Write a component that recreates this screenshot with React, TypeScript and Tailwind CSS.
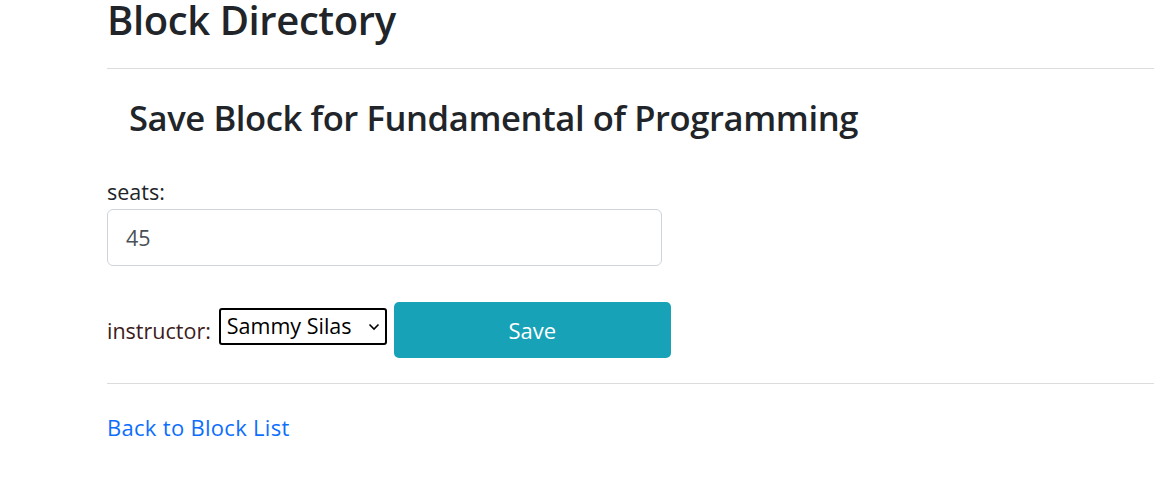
import React from "react";

export default function App() {
  return (
    <div className="min-h-[499px] bg-white pl-[107px] text-[#212529]" style={{ fontFamily: '"Open Sans", "Noto Sans", sans-serif' }}>
      <h1 className="text-[40px] font-semibold leading-[40px] tracking-[-0.4px]">Block Directory</h1>
      <hr className="mt-[28px] border-0 border-t border-[#dcdcdc]" />
      <h2 className="mt-[29px] pl-[22px] text-[34.6px] font-semibold leading-[40px] tracking-[-0.4px]">
        Save Block for Fundamental of Programming
      </h2>
      <div className="mt-[41px] text-[21.5px] leading-[26px]">seats:</div>
      <input
        defaultValue="45"
        className="mt-[4px] block h-[57px] w-[555px] rounded-[6px] border border-[#ced4da] px-[18px] text-[21.5px] text-[#495057] outline-none"
      />
      <div className="mt-[36px] flex items-start">
        <span className="mt-[16px] text-[21.5px] leading-[26px] text-[#3d1c1c]">instructor:</span>
        <div className="ml-[8px] mt-[6px] flex h-[37px] w-[168px] items-center rounded-[3px] border-2 border-black pl-[6px] pr-[5px] text-[21.5px] text-black">
          <span className="flex-1 whitespace-nowrap">Sammy Silas</span>
          <svg width="12" height="8" viewBox="0 0 12 8" fill="none" stroke="black" strokeWidth="1.6">
            <path d="M1.5 1.5 L6 6 L10.5 1.5" />
          </svg>
        </div>
        <button className="ml-[7px] h-[56px] w-[277px] rounded-[5px] bg-[#17a2b8] text-[22px] text-white">Save</button>
      </div>
      <hr className="mt-[25px] border-0 border-t border-[#dcdcdc]" />
      <a href="#" className="mt-[30px] block w-fit text-[22px] leading-[26px] tracking-[0.3px] text-[#0d6efd]">Back to Block List</a>
    </div>
  );
}
